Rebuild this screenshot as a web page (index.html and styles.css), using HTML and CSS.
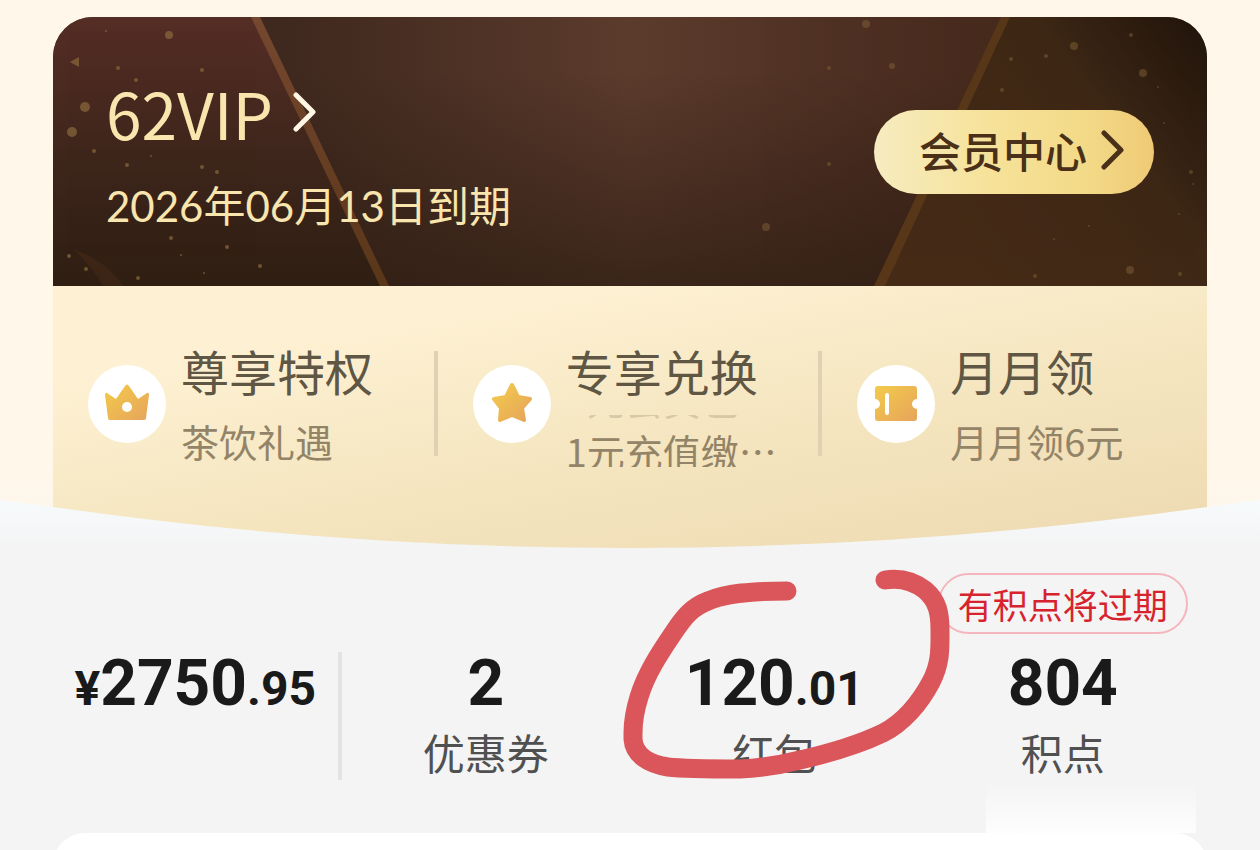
FILE: index.html
```html
<!DOCTYPE html>
<html lang="zh-CN">
<head>
    <meta charset="UTF-8">
    <meta name="viewport" content="width=device-width, initial-scale=1.0">
    <title>会员中心</title>
    <link rel="stylesheet" href="styles.css">
</head>
<body>
    <header class="hero">
        <section class="vip">
            <svg class="vip_bg" viewBox="0 0 1154 269" preserveAspectRatio="none" aria-hidden="true">
                <defs>
                    <linearGradient id="left" x1="0" y1="0" x2="0" y2="1">
                        <stop offset="0" stop-color="#552d25"/>
                        <stop offset=".5" stop-color="#3f261c"/>
                        <stop offset="1" stop-color="#2f1e12"/>
                    </linearGradient>
                    <linearGradient id="right" x1="0" y1=".6" x2="1" y2="0">
                        <stop offset="0" stop-color="#452b16"/>
                        <stop offset=".6" stop-color="#3e2715"/>
                        <stop offset="1" stop-color="#20140b"/>
                    </linearGradient>
                    <linearGradient id="edge" x1="0" y1="0" x2="0" y2="1">
                        <stop offset="0" stop-color="#75482f"/>
                        <stop offset="1" stop-color="#5a3619"/>
                    </linearGradient>
                </defs>
                <path d="M0 0H203L336 269H0Z" fill="url(#left)"/>
                <path d="M954 0H1154V269H826Z" fill="url(#right)"/>
                <path d="M198 0H207L336 269H327Z" fill="url(#edge)"/>
                <path d="M948 0H957L832 269H821Z" fill="#583719"/>
                <path d="M20 232Q55 245 70 269H50Q40 250 20 232Z" fill="#5a3619" opacity=".3"/>
                <g fill="#8a6a3d" opacity=".7">
                    <circle cx="116" cy="18" r="4"/>
                    <path d="M17 45L26 40V50Z"/>
                    <circle cx="32" cy="90" r="5"/>
                    <circle cx="19" cy="115" r="5"/>
                    <circle cx="65" cy="51" r="2"/>
                    <circle cx="83" cy="63" r="2"/>
                    <circle cx="149" cy="53" r="2"/>
                    <circle cx="53" cy="14" r="1"/>
                    <circle cx="41" cy="134" r="2"/>
                    <circle cx="74" cy="148" r="2"/>
                    <circle cx="98" cy="139" r="1"/>
                    <circle cx="149" cy="150" r="2"/>
                    <circle cx="164" cy="155" r="2"/>
                    <circle cx="118" cy="221" r="2"/>
                    <circle cx="107" cy="200" r="1"/>
                    <circle cx="174" cy="230" r="2"/>
                    <circle cx="16" cy="239" r="2"/>
                    <circle cx="33" cy="252" r="2"/>
                    <circle cx="85" cy="261" r="2"/>
                    <circle cx="128" cy="238" r="1"/>
                    <circle cx="151" cy="256" r="1"/>
                    <circle cx="207" cy="249" r="2"/>
                </g>
                <g fill="#806136" opacity=".5">
                    <circle cx="713" cy="210" r="4"/>
                    <circle cx="813" cy="7" r="4"/>
                    <circle cx="839" cy="49" r="3"/>
                    <circle cx="776" cy="51" r="2"/>
                    <circle cx="776" cy="147" r="2"/>
                    <circle cx="1021" cy="29" r="4"/>
                    <circle cx="1090" cy="56" r="4"/>
                    <circle cx="993" cy="39" r="2"/>
                    <circle cx="958" cy="42" r="2"/>
                    <circle cx="1078" cy="18" r="2"/>
                    <circle cx="949" cy="73" r="2"/>
                    <circle cx="1105" cy="70" r="1"/>
                    <circle cx="1111" cy="106" r="1"/>
                    <circle cx="1138" cy="155" r="2"/>
                    <circle cx="1140" cy="167" r="1"/>
                    <circle cx="1126" cy="197" r="1"/>
                    <circle cx="1036" cy="209" r="1"/>
                    <circle cx="1001" cy="222" r="1"/>
                    <circle cx="1077" cy="253" r="4"/>
                    <circle cx="982" cy="259" r="2"/>
                    <circle cx="1127" cy="257" r="2"/>
                </g>
            </svg>
            <div class="vip_info">
                <a class="vip_level" href="#level">62VIP
                    <svg class="arrow" viewBox="0 0 24 42" aria-hidden="true"><path d="M3 4L20 21L3 38"/></svg>
                </a>
                <p class="vip_date">2026年06月13日到期</p>
            </div>
            <button class="vip_button" type="button">会员中心
                <svg class="arrow" viewBox="0 0 24 42" aria-hidden="true"><path d="M3 4L20 21L3 38"/></svg>
            </button>
        </section>

        <section class="rights">
            <a class="right" href="#rights">
                <svg class="right_icon" viewBox="0 0 78 78" aria-hidden="true">
                    <defs>
                        <linearGradient id="gold" x1="0" y1="0" x2="1" y2="1">
                            <stop offset="0" stop-color="#f3cb4a"/>
                            <stop offset="1" stop-color="#e6a45c"/>
                        </linearGradient>
                    </defs>
                    <circle cx="39" cy="39" r="39" fill="#fff"/>
                    <path d="M19 28L28 34L37 21Q39 18 41 21L50 34L59 28Q61 27 61 30L58 53Q58 55 56 55H22Q20 55 20 53L17 30Q17 27 19 28Z" fill="url(#gold)"/>
                    <circle cx="39" cy="42" r="5" fill="#fff"/>
                </svg>
                <span class="right_text">
                    <span class="right_title">尊享特权</span>
                    <span class="right_sub">茶饮礼遇</span>
                </span>
            </a>
            <a class="right" href="#exchange">
                <svg class="right_icon" viewBox="0 0 78 78" aria-hidden="true">
                    <circle cx="39" cy="39" r="39" fill="#fff"/>
                    <path d="M39 20L45 32L57 34L49 43L51 55L39 50L27 55L28 43L21 34L33 32Z" fill="url(#gold)" stroke="url(#gold)" stroke-width="4" stroke-linejoin="round"/>
                </svg>
                <span class="right_text">
                    <span class="right_title">专享兑换</span>
                    <!-- rolling text, stopped between two lines -->
                    <span class="right_sub roll">
                        <span class="roll_old">1元会员包</span>
                        <span class="roll_new">1元充值缴…</span>
                    </span>
                </span>
            </a>
            <a class="right" href="#monthly">
                <svg class="right_icon" viewBox="0 0 78 78" aria-hidden="true">
                    <circle cx="39" cy="39" r="39" fill="#fff"/>
                    <path d="M21 21H57Q60 21 60 24V34A5 5 0 0 0 60 44V53Q60 56 57 56H21Q18 56 18 53V44A5 5 0 0 0 18 34V24Q18 21 21 21Z" fill="url(#gold)"/>
                    <path d="M30 30V48" stroke="#fff" stroke-width="4" stroke-linecap="round"/>
                </svg>
                <span class="right_text">
                    <span class="right_title">月月领</span>
                    <span class="right_sub">月月领6元</span>
                </span>
            </a>
        </section>

        <svg class="curve" viewBox="0 0 1260 60" preserveAspectRatio="none" aria-hidden="true">
            <defs>
                <linearGradient id="sheet" x1="0" y1="0" x2="0" y2="1">
                    <stop offset="0" stop-color="#f7fafc"/>
                    <stop offset="1" stop-color="#f4f4f4"/>
                </linearGradient>
            </defs>
            <path d="M0 12L53 19Q340 60 630 60T1207 19L1260 12V60H0Z" fill="url(#sheet)"/>
        </svg>
    </header>

    <main class="wallet">
        <a class="item balance" href="#balance">
            <span class="num"><small>¥</small>2750<small>.95</small></span>
        </a>
        <a class="item" href="#coupon">
            <span class="num">2</span>
            <span class="label">优惠券</span>
        </a>
        <a class="item" href="#redpacket">
            <span class="num">120<small>.01</small></span>
            <span class="label">红包</span>
            <svg class="mark" viewBox="0 0 340 220" aria-hidden="true">
                <path d="M167 31C132 31 106 33 88 41C72 47 64 57 54 72C39 94 26 114 19 137C15 150 13 162 13 173V179C14 195 29 204 48 207C65 209 95 209 120 209C145 208 160 205 180 200C215 192 238 185 263 173C283 163 300 143 311 122C321 103 320 88 320 70C320 54 318 41 305 30C292 20 277 18 265 20"/>
            </svg>
        </a>
        <a class="item" href="#points">
            <span class="badge">有积点将过期</span>
            <span class="num">804</span>
            <span class="label">积点</span>
        </a>
    </main>

    <div class="next">
        <section class="panel"></section>
    </div>
</body>
</html>
```
FILE: styles.css
```css
* {
    box-sizing: border-box;
}

body {
    margin: 0;
    min-height: 100vh;
    display: flex;
    flex-direction: column;
    background: #f4f4f4;
    font-family: "Noto Sans CJK SC", sans-serif;
}

a {
    color: inherit;
    text-decoration: none;
}

.hero {
    position: relative;
    padding: 17px 53px 0;
    background: linear-gradient(#fff7ea 85%, #fdf6ec);
}

/* dark card */
.vip {
    position: relative;
    display: flex;
    justify-content: space-between;
    align-items: center;
    height: 269px;
    padding: 0 53px;
    border-radius: 40px 40px 0 0;
    overflow: hidden;
    background: linear-gradient(#2a1a1000 20%, #2a1a10aa), linear-gradient(90deg, #3f281e 20%, #5b3b2c 50%, #472a1d 80%);
}

.vip_bg {
    position: absolute;
    inset: 0;
    width: 100%;
    height: 100%;
}

.vip_info {
    position: relative;
    padding-top: 6px;
    color: #f9e5ae;
}

.vip_level {
    display: flex;
    align-items: center;
    gap: 20px;
    font-size: 64px;
    line-height: 76px;
}

.arrow {
    width: 24px;
    height: 42px;
    fill: none;
    stroke: #4a3018;
    stroke-width: 5;
    stroke-linecap: round;
    stroke-linejoin: round;
}

.vip_level .arrow {
    stroke: #fff6e4;
}

.vip_date {
    margin: 26px 0 0;
    font-family: Lato, "Noto Sans CJK SC", sans-serif;
    font-size: 42px;
    line-height: 60px;
}

.vip_button {
    position: relative;
    display: flex;
    align-items: center;
    justify-content: center;
    gap: 14px;
    width: 280px;
    height: 84px;
    padding: 0 0 4px 16px;
    border: 0;
    border-radius: 42px;
    background: linear-gradient(90deg, #f6ecc0, #f6e29a 40%, #f3da88 75%, #efca75);
    color: #4a3018;
    font-family: inherit;
    font-size: 42px;
    font-weight: 500;
}

/* privileges */
.rights {
    display: grid;
    grid-template-columns: repeat(3, 1fr);
    height: 262px;
    padding-top: 65px;
    background: linear-gradient(170deg, #fef1d3 20%, #f6e8c3 50%, #edd9b0);
}

.right {
    display: flex;
    align-items: center;
    gap: 15px;
    height: 105px;
    padding-left: 35px;
    border-right: 4px solid #e0d1b2;
}

.right:last-child {
    border-right: 0;
}

.right_icon {
    flex: none;
    width: 78px;
    height: 78px;
}

.right_text {
    display: flex;
    flex-direction: column;
    white-space: nowrap;
}

.right_title {
    color: #5f5644;
    font-size: 48px;
    line-height: 60px;
}

.right_sub {
    height: 52px;
    margin-top: 15px;
    color: #938468;
    font-size: 38px;
    line-height: 52px;
}

.roll {
    overflow: hidden;
}

.roll span {
    display: block;
}

.roll .roll_old {
    margin-top: -42px;
    opacity: .3;
}

.curve {
    position: absolute;
    left: 0;
    bottom: 0;
    width: 100%;
    height: 60px;
}

/* numbers */
.wallet {
    position: relative;
    display: grid;
    grid-template-columns: repeat(4, 1fr);
    padding: 104px 53px 53px;
}

/* soft light above the right part of the panel */
.wallet::after {
    content: "";
    position: absolute;
    right: 64px;
    bottom: 0;
    width: 210px;
    height: 50px;
    background: linear-gradient(#f4f4f4, #fdfdfd);
}

.item {
    position: relative;
    display: flex;
    flex-direction: column;
    align-items: center;
    height: 128px;
}

.balance {
    border-right: 4px solid #e3e3e3;
}

.num {
    color: #1a1a1a;
    font-family: Roboto, "Noto Sans CJK SC", sans-serif;
    font-size: 64px;
    font-weight: 700;
    line-height: 64px;
}

.num small {
    font-size: 48px;
    line-height: 1px;
}

.label {
    margin-top: 6px;
    color: #505050;
    font-size: 42px;
    line-height: 60px;
}

.badge {
    position: absolute;
    bottom: 146px;
    padding: 0 18px;
    border: 2px solid #f4b6bc;
    border-radius: 31px;
    color: #d7232e;
    font-size: 35px;
    line-height: 57px;
    white-space: nowrap;
}

.mark {
    position: absolute;
    z-index: 1;
    left: -10px;
    bottom: 0;
    width: 340px;
    height: 220px;
    fill: none;
    stroke: #da565a;
    stroke-width: 19;
    stroke-linecap: round;
    stroke-linejoin: round;
}

/* only the top of the next panel shows above the fold */
.next {
    flex: 1 1 0;
    padding: 0 53px;
    overflow: hidden;
}

.panel {
    height: 120px;
    border-radius: 32px;
    background: #fff;
}
```
